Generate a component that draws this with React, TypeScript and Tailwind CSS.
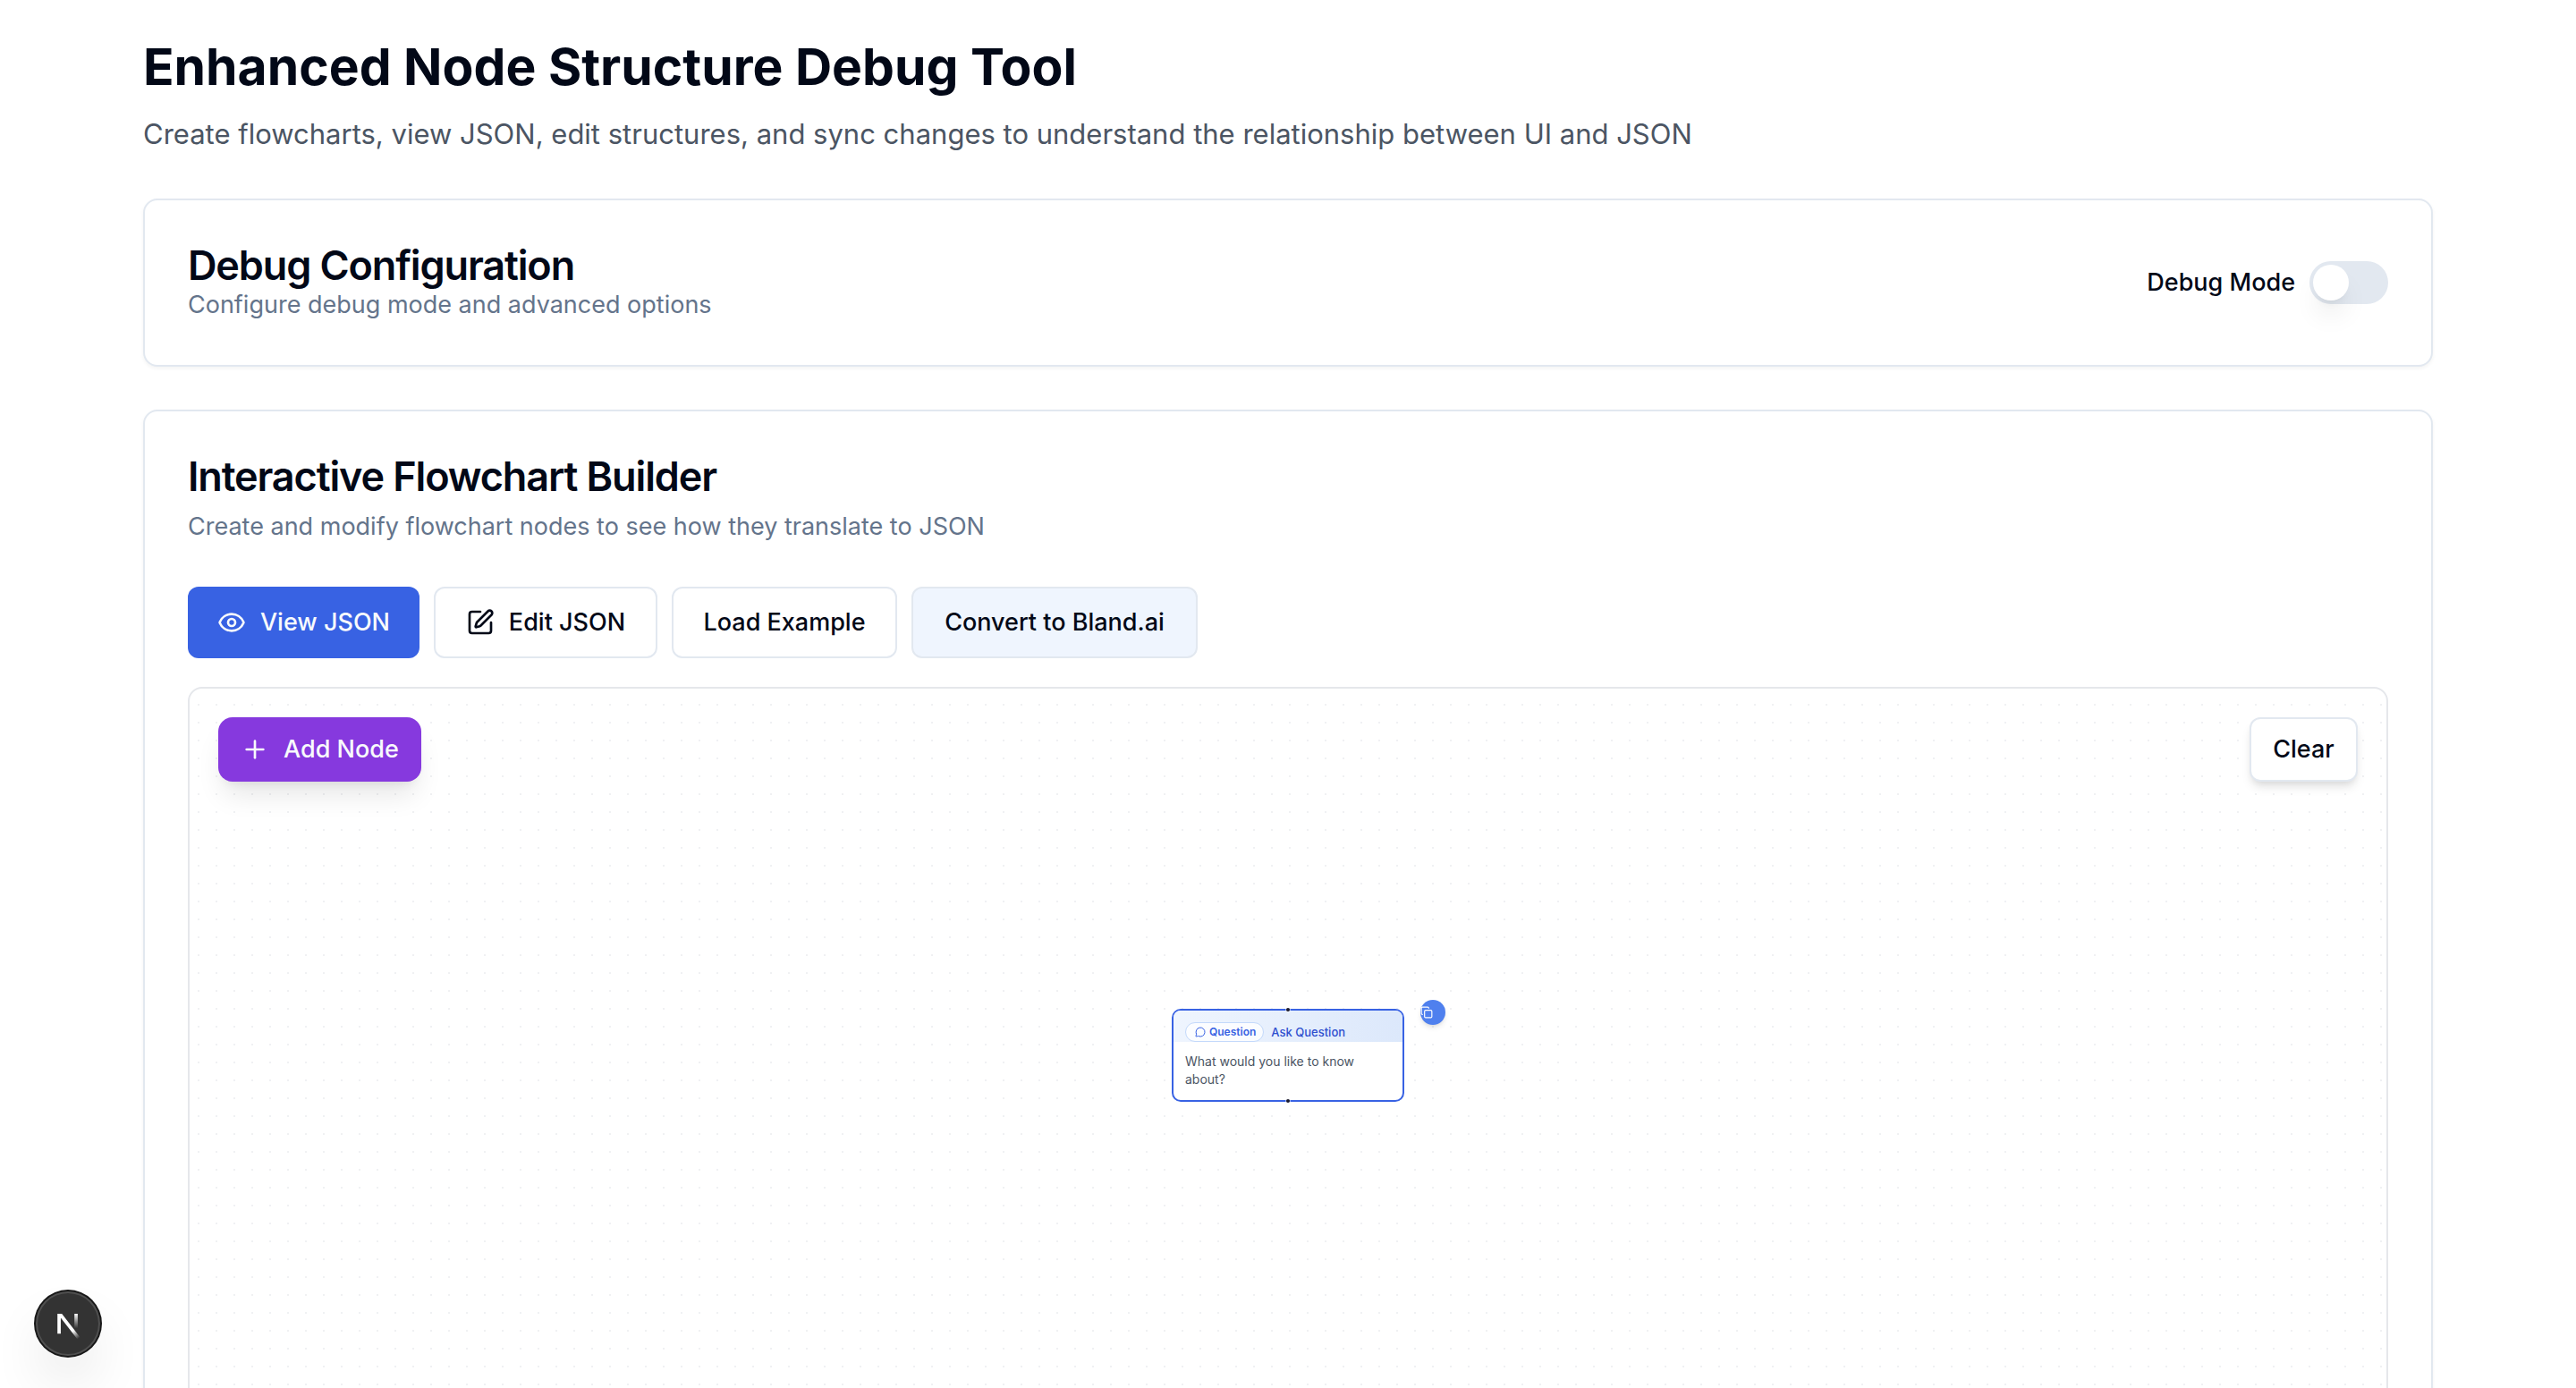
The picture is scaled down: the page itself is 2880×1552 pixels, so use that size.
import { useState, type ReactNode } from 'react';
import { Copy, Eye, MessageCircle, Plus, SquarePen } from 'lucide-react';

function Card({ children }: { children: ReactNode }) {
  return (
    <section className="rounded-2xl border-2 border-[#e2e8f0] bg-white p-12 shadow-[0_2px_4px_rgba(0,0,0,0.05)]">
      {children}
    </section>
  );
}

function CardTitle({ children }: { children: ReactNode }) {
  return <h2 className="text-[45px] leading-[50px] font-semibold tracking-tight">{children}</h2>;
}

function ToolbarButton({ children, tone }: { children: ReactNode; tone: string }) {
  return (
    <button
      type="button"
      className={`flex h-20 items-center justify-center gap-4 rounded-xl text-[27px] leading-10 font-medium whitespace-nowrap ${tone}`}
    >
      {children}
    </button>
  );
}

function DebugSwitch() {
  const [on, setOn] = useState(false);
  return (
    <div className="flex items-center gap-4">
      <label htmlFor="debug-mode" className="text-[27px] leading-7 font-medium">
        Debug Mode
      </label>
      <input
        id="debug-mode"
        type="checkbox"
        role="switch"
        checked={on}
        onChange={(e) => setOn(e.target.checked)}
        className="flex h-12 w-[88px] appearance-none items-center rounded-full bg-[#e2e8f0] px-1 before:block before:size-10 before:rounded-full before:bg-white before:shadow-[0_20px_30px_-6px_rgba(0,0,0,0.1),0_8px_12px_-8px_rgba(0,0,0,0.1)] before:content-[''] checked:justify-end checked:bg-[#020817]"
      />
    </div>
  );
}

function QuestionNode() {
  return (
    <div className="absolute top-[358px] left-1/2 w-[260px] -translate-x-1/2">
      <article className="overflow-hidden rounded-[10px] border-2 border-[#3862e3] bg-white">
        <header className="flex items-end gap-2 bg-linear-to-r from-[#eff5fe] to-[#dce8fb] px-[13px] pt-[13px]">
          <span className="flex h-[22px] items-center gap-1 rounded-full border border-[#c3d9fb] bg-white/80 pr-2 pl-2.5 text-xs font-semibold text-[#3862e3]">
            <MessageCircle className="size-3" />
            Question
          </span>
          <h3 className="text-[13px] leading-[22px] font-medium text-[#2f4fcf]">Ask Question</h3>
        </header>
        <p className="px-[13px] pt-3 pb-[13px] text-sm leading-5 text-[#4b5563]">
          What would you like to know about?
        </p>
      </article>
      <span className="absolute -top-px left-1/2 size-1 -translate-x-1/2 rounded-full bg-[#1a192b] ring-1 ring-white/50" />
      <span className="absolute -bottom-px left-1/2 size-1 -translate-x-1/2 rounded-full bg-[#1a192b] ring-1 ring-white/50" />
      <button
        type="button"
        aria-label="Duplicate node"
        className="absolute -top-2.5 -right-[46px] flex size-7 items-center rounded-full bg-[#4f80ee] text-white shadow-md"
      >
        <Copy className="size-3.5" />
      </button>
    </div>
  );
}

function NextBadge() {
  return (
    <button
      type="button"
      aria-label="Open Next.js Dev Tools"
      className="absolute bottom-9 left-10 size-[72px] rounded-full bg-[#333333] shadow-[0_0_0_2px_#171717,inset_0_0_0_2px_rgba(255,255,255,0.14),0_32px_64px_-16px_rgba(0,0,0,0.24)]"
    >
      <svg viewBox="2 2 36 36" className="size-full" fill="none" aria-hidden="true">
        <g transform="translate(12.7 13)" clipPath="url(#nextClip)">
          <path d="M13.3 15.2 L2.34 1 V12.6" stroke="url(#nextDiagonal)" strokeWidth="1.86" />
          <path d="M11.825 1.5 V13.1" stroke="url(#nextStem)" strokeWidth="1.86" />
        </g>
        <defs>
          <clipPath id="nextClip">
            <rect x="1" y="1.5" width="16" height="16" />
          </clipPath>
          <linearGradient id="nextDiagonal" x1="9.95555" y1="11.1226" x2="15.4778" y2="17.9671" gradientUnits="userSpaceOnUse">
            <stop stopColor="white" />
            <stop offset="0.604072" stopColor="white" stopOpacity="0" />
            <stop offset="1" stopColor="white" stopOpacity="0" />
          </linearGradient>
          <linearGradient id="nextStem" x1="11.8222" y1="1.40039" x2="11.791" y2="9.62542" gradientUnits="userSpaceOnUse">
            <stop stopColor="white" />
            <stop offset="1" stopColor="white" stopOpacity="0" />
          </linearGradient>
        </defs>
      </svg>
    </button>
  );
}

export default function App() {
  return (
    <div className="relative h-screen overflow-hidden bg-white font-[Inter,sans-serif] text-[#020817]">
      <main className="flex flex-col gap-12 px-40 pt-10">
        <header className="flex flex-col gap-4">
          <h1 className="text-[57px] leading-[70px] font-bold">Enhanced Node Structure Debug Tool</h1>
          <p className="text-[31px] leading-[48px] text-[#4b5563]">
            Create flowcharts, view JSON, edit structures, and sync changes to understand the relationship between UI
            and JSON
          </p>
        </header>

        <Card>
          <div className="flex items-center justify-between">
            <div>
              <CardTitle>Debug Configuration</CardTitle>
              <p className="text-[27px] leading-[38px] text-[#64748b]">Configure debug mode and advanced options</p>
            </div>
            <DebugSwitch />
          </div>
        </Card>

        <Card>
          <CardTitle>Interactive Flowchart Builder</CardTitle>
          <p className="mt-3 text-[27px] leading-[38px] text-[#64748b]">
            Create and modify flowchart nodes to see how they translate to JSON
          </p>

          <div className="mt-12 flex gap-4">
            <ToolbarButton tone="min-w-[259px] bg-[#3862e3] text-[#f8fafc]">
              <Eye className="size-8" />
              View JSON
            </ToolbarButton>
            <ToolbarButton tone="min-w-[250px] border-2 border-[#e2e8f0] bg-white">
              <SquarePen className="size-8" />
              Edit JSON
            </ToolbarButton>
            <ToolbarButton tone="min-w-[252px] border-2 border-[#e2e8f0] bg-white">Load Example</ToolbarButton>
            <ToolbarButton tone="min-w-[320px] border-2 border-[#e2e8f0] bg-[#eff5fe]">Convert to Bland.ai</ToolbarButton>
          </div>

          <div className="relative mt-8 h-[824px] overflow-hidden rounded-2xl border-2 border-[#e5e7eb] bg-[radial-gradient(circle_at_center,#f0f1f3_1px,transparent_1px)] bg-[size:20px_20px] bg-[position:0px_8px]">
            <div className="flex justify-between p-8">
              <button
                type="button"
                className="flex h-[72px] min-w-[227px] items-center justify-center gap-4 rounded-2xl bg-[#8639de] text-[27px] leading-10 font-medium text-[#f8fafc] shadow-[0_20px_30px_-6px_rgba(0,0,0,0.1),0_8px_12px_-8px_rgba(0,0,0,0.1)]"
              >
                <Plus className="size-8" />
                Add Node
              </button>
              <button
                type="button"
                className="h-[72px] min-w-[121px] rounded-xl border-2 border-[#e2e8f0] bg-white text-[27px] leading-10 font-medium shadow-[0_8px_12px_-2px_rgba(0,0,0,0.1),0_4px_8px_-4px_rgba(0,0,0,0.1)]"
              >
                Clear
              </button>
            </div>
            <QuestionNode />
          </div>
        </Card>
      </main>
      <NextBadge />
    </div>
  );
}
